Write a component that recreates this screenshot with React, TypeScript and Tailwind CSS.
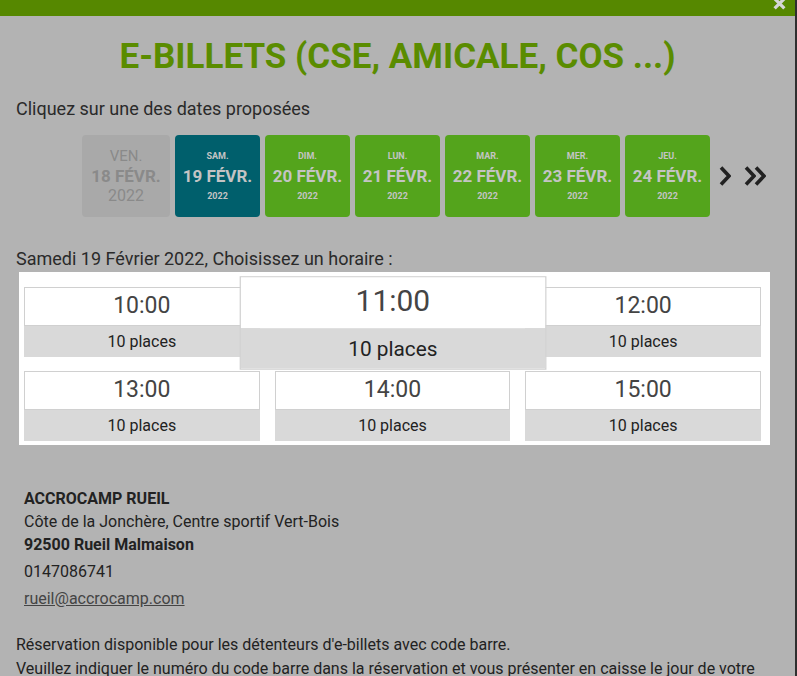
import { useState } from 'react';

type Day = { dow: string; date: string; year: string; state: 'off' | 'active' | 'open' };

const DAYS: Day[] = [
  { dow: 'VEN.', date: '18 FÉVR.', year: '2022', state: 'off' },
  { dow: 'SAM.', date: '19 FÉVR.', year: '2022', state: 'active' },
  { dow: 'DIM.', date: '20 FÉVR.', year: '2022', state: 'open' },
  { dow: 'LUN.', date: '21 FÉVR.', year: '2022', state: 'open' },
  { dow: 'MAR.', date: '22 FÉVR.', year: '2022', state: 'open' },
  { dow: 'MER.', date: '23 FÉVR.', year: '2022', state: 'open' },
  { dow: 'JEU.', date: '24 FÉVR.', year: '2022', state: 'open' },
];

const SLOTS = ['10:00', '11:00', '12:00', '13:00', '14:00', '15:00'];

function Chevron({ className = '' }: { className?: string }) {
  return (
    <svg viewBox="0 0 12 20" className={className} aria-hidden="true">
      <path d="M2 1.5 L10 10 L2 18.5" fill="none" stroke="#222" strokeWidth="3.6" strokeLinejoin="miter" />
    </svg>
  );
}

function DayButton({ day }: { day: Day }) {
  if (day.state === 'off') {
    return (
      <div className="flex h-[82px] w-[88px] flex-col items-center justify-center rounded-[4px] bg-[#a9a9a9] leading-[20px] text-[#8a8a8a]">
        <span className="text-[15px]">{day.dow}</span>
        <span className="text-[17px] font-bold">{day.date}</span>
        <span className="text-[16px]">{day.year}</span>
      </div>
    );
  }
  const bg = day.state === 'active' ? 'bg-[#005f6c]' : 'bg-[#54a41c]';
  return (
    <button
      type="button"
      className={`flex h-[82px] w-[85px] flex-col items-center justify-center rounded-[4px] ${bg} text-[#c4c4c4]`}
    >
      <span className="text-[9px] font-bold leading-[18px]">{day.dow}</span>
      <span className="text-[17px] font-bold leading-[22px]">{day.date}</span>
      <span className="text-[9px] font-bold leading-[18px]">{day.year}</span>
    </button>
  );
}

function Slot({ time, hovered, onHover }: { time: string; hovered: boolean; onHover: () => void }) {
  return (
    <div
      onMouseEnter={onHover}
      className={`relative flex flex-col ${hovered ? 'z-10 scale-[1.3] border border-[#d2d2d2]' : ''}`}
    >
      <div className={`flex h-[39px] items-center justify-center bg-white text-[23px] text-[#444] ${hovered ? '' : 'border border-[#d0d0d0]'}`}>
        {time}
      </div>
      <div className="flex h-[31px] items-center justify-center bg-[#d9d9d9] text-[16px] text-[#222]">10 places</div>
    </div>
  );
}

export default function App() {
  const [hover, setHover] = useState('11:00');

  return (
    <div className="relative h-[676px] w-full overflow-hidden border-r-2 border-[#2f2f2f] bg-[#b3b3b3] font-['Roboto',sans-serif] text-[#2a2a2a]">
      <div className="h-[16px] bg-[#568800]" />
      <button type="button" aria-label="Fermer" className="absolute right-[9px] top-[-3px]">
        <svg viewBox="0 0 12 12" className="h-[13px] w-[13px]">
          <path d="M1.5 1.5 L10.5 10.5 M10.5 1.5 L1.5 10.5" stroke="#d6d6d6" strokeWidth="3" />
        </svg>
      </button>

      <h1 className="mt-[20px] text-center text-[35px] font-bold leading-[41px] text-[#5a8c00]">
        E-BILLETS (CSE, AMICALE, COS ...)
      </h1>

      <p className="ml-[16px] mt-[21px] text-[18px] leading-[22px]">Cliquez sur une des dates proposées</p>

      <div className="ml-[82px] mt-[15px] flex items-center gap-[5px]">
        {DAYS.map((d) => (
          <DayButton key={d.date} day={d} />
        ))}
        <div className="ml-[4px] flex items-center gap-[13px]">
          <Chevron className="h-[20px] w-[12px]" />
          <div className="flex">
            <Chevron className="h-[20px] w-[12px]" />
            <Chevron className="-ml-[2px] h-[20px] w-[12px]" />
          </div>
        </div>
      </div>

      <p className="ml-[16px] mt-[31px] text-[18px] leading-[22px]">Samedi 19 Février 2022, Choisissez un horaire :</p>

      <div className="ml-[19px] mt-[2px] w-[751px] bg-white pb-[4px] pl-[5px] pr-[9px] pt-[15px]">
        <div className="grid grid-cols-3 gap-x-[15px] gap-y-[12px]">
          {SLOTS.map((t) => (
            <Slot key={t} time={t} hovered={hover === t} onHover={() => setHover(t)} />
          ))}
        </div>
      </div>

      <div className="ml-[24px] mt-[42px] text-[16px] text-[#222]">
        <p className="font-bold leading-[23px]">ACCROCAMP RUEIL</p>
        <p className="leading-[23px]">Côte de la Jonchère, Centre sportif Vert-Bois</p>
        <p className="font-bold leading-[23px]">92500 Rueil Malmaison</p>
        <p className="mt-[3px] leading-[26px]">0147086741</p>
        <a href="#" className="block leading-[28px] text-[#444] underline">
          rueil@accrocamp.com
        </a>
      </div>

      <div className="ml-[16px] mt-[20px] text-[16px] leading-[24px] text-[#222]">
        <p>Réservation disponible pour les détenteurs d'e-billets avec code barre.</p>
        <p>Veuillez indiquer le numéro du code barre dans la réservation et vous présenter en caisse le jour de votre</p>
      </div>
    </div>
  );
}
